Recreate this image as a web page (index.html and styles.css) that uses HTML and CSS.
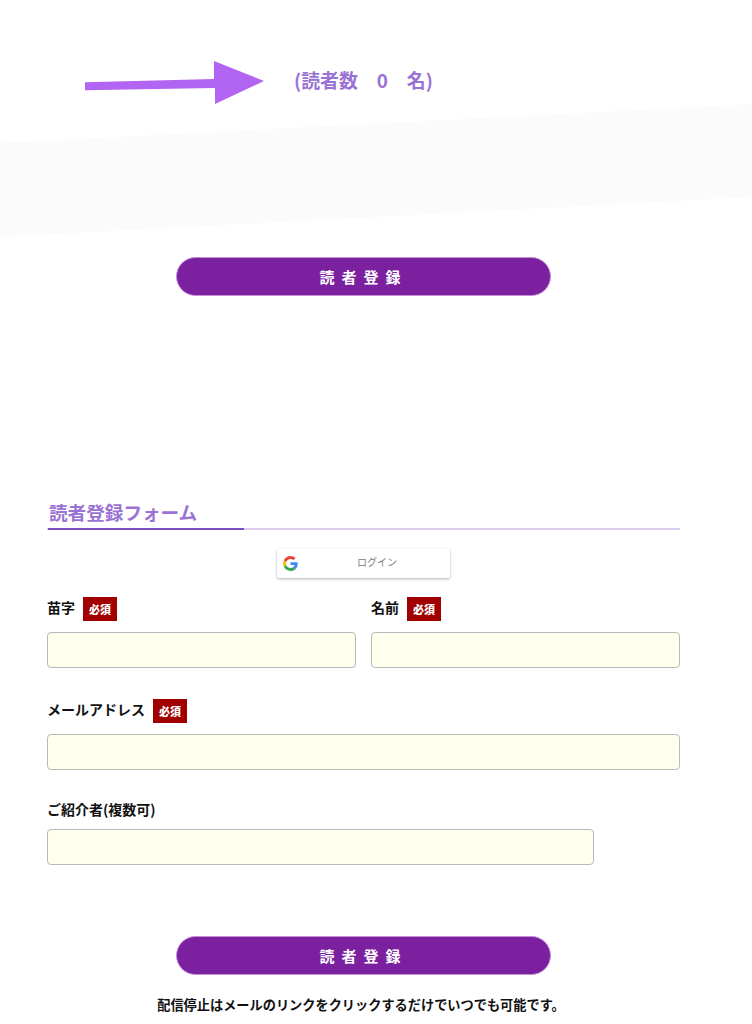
FILE: index.html
```html
<!DOCTYPE html>
<html lang="ja">
<head>
<meta charset="utf-8">
<title>読者登録フォーム</title>
<link rel="stylesheet" href="styles.css">
</head>
<body>
<header class="counter">
  <svg class="arrow" width="179" height="43" viewBox="0 0 179 43" aria-hidden="true">
    <path d="M0 21.3 L129 18 L129 0 L179 20 L130 43 L130 27 L0 29.3 Z" fill="#b264f2"/>
  </svg>
  <p class="count">(読者数&emsp;0&emsp;名)</p>
</header>
<div class="band"></div>
<div class="cta cta-top"><button class="pill" type="button">読者登録</button></div>
<main class="form-wrap">
  <h2 class="form-title">読者登録フォーム</h2>
  <div class="google-row">
    <button class="google" type="button">
      <svg class="g-logo" width="15" height="15" viewBox="0 0 48 48" aria-hidden="true">
        <path fill="#EA4335" d="M24 9.5c3.54 0 6.71 1.22 9.21 3.6l6.85-6.85C35.9 2.38 30.47 0 24 0 14.62 0 6.51 5.38 2.56 13.22l7.98 6.19C12.43 13.72 17.74 9.5 24 9.5z"/>
        <path fill="#4285F4" d="M46.98 24.55c0-1.57-.15-3.09-.38-4.55H24v9.02h12.94c-.58 2.96-2.26 5.48-4.78 7.18l7.73 6c4.51-4.18 7.09-10.36 7.09-17.65z"/>
        <path fill="#FBBC05" d="M10.53 28.59c-.48-1.45-.76-2.99-.76-4.59s.27-3.14.76-4.59l-7.98-6.19C.92 16.46 0 20.12 0 24c0 3.88.92 7.54 2.56 10.78l7.97-6.19z"/>
        <path fill="#34A853" d="M24 48c6.48 0 11.93-2.13 15.89-5.81l-7.73-6c-2.15 1.45-4.92 2.3-8.16 2.3-6.26 0-11.57-4.22-13.47-9.91l-7.98 6.19C6.51 42.62 14.62 48 24 48z"/>
      </svg>
      <span class="g-text">ログイン</span>
    </button>
  </div>
  <div class="name-row">
    <div class="field">
      <div class="label-row"><label class="label" for="sei">苗字</label><span class="req">必須</span></div>
      <input class="input" id="sei" type="text">
    </div>
    <div class="field">
      <div class="label-row"><label class="label" for="mei">名前</label><span class="req">必須</span></div>
      <input class="input" id="mei" type="text">
    </div>
  </div>
  <div class="field field-mail">
    <div class="label-row"><label class="label" for="mail">メールアドレス</label><span class="req">必須</span></div>
    <input class="input" id="mail" type="text">
  </div>
  <div class="field field-ref">
    <div class="label-row plain"><label class="label" for="ref">ご紹介者(複数可)</label></div>
    <input class="input" id="ref" type="text">
  </div>
</main>
<div class="cta cta-bottom"><button class="pill" type="button">読者登録</button></div>
<p class="note">配信停止はメールのリンクをクリックするだけでいつでも可能です。</p>
</body>
</html>
```
FILE: styles.css
```css
* { box-sizing: border-box; }
html, body { margin: 0; padding: 0; background: #fff; }
body {
  font-family: "Noto Sans CJK JP", "Noto Sans", sans-serif;
  color: #111;
  height: 1024px;
  overflow: hidden;
}
.counter {
  display: flex;
  align-items: flex-start;
  height: 104px;
  padding: 61px 0 0 85px;
}
.arrow { flex: none; }
.count {
  margin: 6px 0 0 30px;
  font-size: 18.9px;
  line-height: 26px;
  font-weight: 700;
  color: #9a72d4;
  white-space: nowrap;
}
.band {
  height: 133px;
  background: #fbfbfb;
  clip-path: polygon(0 39px, 100% 0, 100% 93px, 0 100%);
}
.cta { display: flex; padding-left: 176px; }
.cta-top { margin-top: 20px; }
.cta-bottom { margin-top: 71px; }
.pill {
  width: 375px;
  height: 39px;
  padding: 0;
  border: 1px solid #c58fdc;
  border-radius: 20px;
  background: #7b219f;
  color: #fff;
  font-family: inherit;
  font-size: 15px;
  font-weight: 700;
  letter-spacing: 7px;
  line-height: 1;
}
.form-wrap { width: 633px; margin: 205px 0 0 47px; }
.form-title {
  margin: 0;
  height: 29px;
  padding-left: 2px;
  font-size: 18.6px;
  line-height: 22px;
  font-weight: 700;
  color: #9a72d4;
  background:
    linear-gradient(#7b4fc4, #7b4fc4) 1px 100% / 196px 2px no-repeat,
    linear-gradient(#dccdee, #dccdee) 0 100% / 100% 2px no-repeat;
}
.google-row { display: flex; padding-left: 230px; margin-top: 19px; }
.google {
  display: flex;
  align-items: center;
  width: 173px;
  height: 29px;
  padding: 0 0 0 6px;
  border: 0;
  border-radius: 2px;
  background: #fff;
  box-shadow: 0 1px 3px rgba(0, 0, 0, .3);
  font-family: inherit;
}
.g-logo { flex: none; }
.g-text {
  flex: 1;
  padding-left: 6px;
  margin-bottom: 4px;
  font-size: 10px;
  color: #808080;
  text-align: center;
}
.name-row { display: flex; gap: 15px; margin-top: 19px; }
.name-row .field { flex: 1; }
.label-row { display: flex; align-items: center; gap: 8px; height: 24px; }
.label { margin-bottom: 4px; font-size: 14px; font-weight: 700; line-height: 20px; color: #111; }
.req {
  display: flex;
  align-items: center;
  justify-content: center;
  width: 34px;
  height: 24px;
  background: #a00000;
  color: #fff;
  font-size: 11px;
  font-weight: 900;
}
.input {
  display: block;
  width: 100%;
  height: 36px;
  margin-top: 11px;
  border: 1px solid #b9b9b9;
  border-radius: 4px;
  background: #ffffee;
}
.field-mail { margin-top: 31px; }
.field-ref { width: 547px; margin-top: 29px; }
.plain { height: 20px; }
.plain .label { margin-bottom: 0; }
.field-ref .input { margin-top: 10px; }
.note {
  margin: 20px 0 0;
  width: 722px;
  font-size: 13.2px;
  line-height: 20px;
  font-weight: 700;
  text-align: center;
  color: #111;
}
```
